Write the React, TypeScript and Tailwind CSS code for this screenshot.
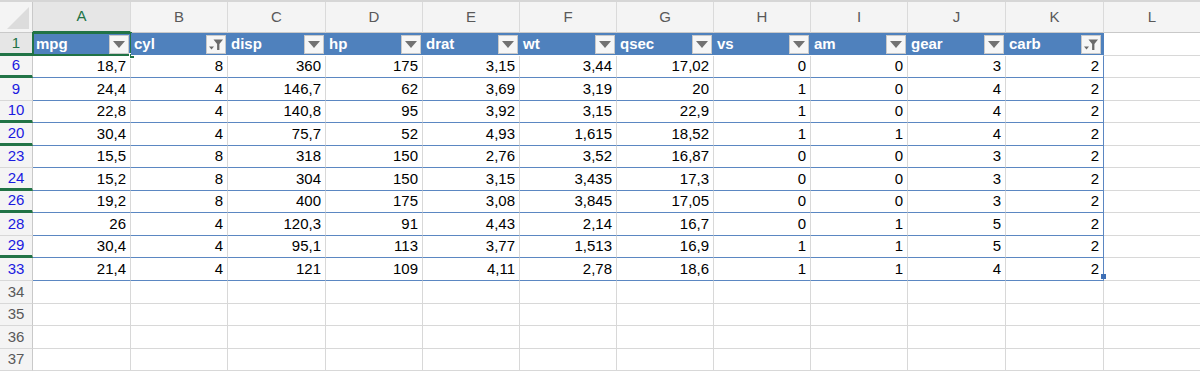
const font = { fontFamily: '"Liberation Sans", Arial, sans-serif' };

const cols = ["A", "B", "C", "D", "E", "F", "G", "H", "I", "J", "K"];
const widths = [
  "w-[98px]",
  "w-[97px]",
  "w-[98px]",
  "w-[97px]",
  "w-[97px]",
  "w-[97px]",
  "w-[97px]",
  "w-[97px]",
  "w-[97px]",
  "w-[98px]",
  "w-[98px]",
];
const heads = ["mpg", "cyl", "disp", "hp", "drat", "wt", "qsec", "vs", "am", "gear", "carb"];
const filtered = ["cyl", "carb"];

const rows: [number, string[]][] = [
  [6, ["18,7", "8", "360", "175", "3,15", "3,44", "17,02", "0", "0", "3", "2"]],
  [9, ["24,4", "4", "146,7", "62", "3,69", "3,19", "20", "1", "0", "4", "2"]],
  [10, ["22,8", "4", "140,8", "95", "3,92", "3,15", "22,9", "1", "0", "4", "2"]],
  [20, ["30,4", "4", "75,7", "52", "4,93", "1,615", "18,52", "1", "1", "4", "2"]],
  [23, ["15,5", "8", "318", "150", "2,76", "3,52", "16,87", "0", "0", "3", "2"]],
  [24, ["15,2", "8", "304", "150", "3,15", "3,435", "17,3", "0", "0", "3", "2"]],
  [26, ["19,2", "8", "400", "175", "3,08", "3,845", "17,05", "0", "0", "3", "2"]],
  [28, ["26", "4", "120,3", "91", "4,43", "2,14", "16,7", "0", "1", "5", "2"]],
  [29, ["30,4", "4", "95,1", "113", "3,77", "1,513", "16,9", "1", "1", "5", "2"]],
  [33, ["21,4", "4", "121", "109", "4,11", "2,78", "18,6", "1", "1", "4", "2"]],
];

function FilterButton({ active }: { active: boolean }) {
  return (
    <div className="w-[20px] h-[19px] mr-[2px] bg-[#f6f6f6] border border-[#c9c9c9] flex items-center justify-center">
      {active ? (
        <svg width="16" height="13" viewBox="0 0 16 13">
          <path d="M1 8.5h5l-2.5 3z" fill="#6a6a6a" />
          <path d="M5.5 1.5h9.5l-3.6 4.5v6h-2.3v-6z" fill="#6a6a6a" />
        </svg>
      ) : (
        <svg width="12" height="7" viewBox="0 0 12 7">
          <path d="M0 0h12l-6 7z" fill="#727272" />
        </svg>
      )}
    </div>
  );
}

function RowHeader({ n, color, marker, h }: { n: number; color: string; marker: boolean; h: string }) {
  return (
    <div
      className={`w-[33px] shrink-0 ${h} bg-[#f4f4f4] border-r border-[#c9c9c9] flex items-center justify-center text-[15px] ${color} ${
        marker ? "border-b-[3px] border-b-[#217346]" : "border-b border-b-[#d8d8d8]"
      }`}
    >
      {n}
    </div>
  );
}

export default function App() {
  const heights = ["h-[22px]", "h-[23px]"];
  const empty = [34, 35, 36, 37];

  return (
    <div className="w-[1200px] h-[372px] overflow-hidden bg-white text-black" style={font}>
      {/* column letters */}
      <div className="flex h-[33px] border-t-2 border-[#d6d6d6] bg-[#f4f4f4]">
        <div className="w-[33px] shrink-0 border-r border-b border-[#c9c9c9] relative">
          <svg className="absolute right-[3px] bottom-[3px]" width="22" height="22" viewBox="0 0 22 22">
            <path d="M22 0v22H0z" fill="#dcdcdc" />
          </svg>
        </div>
        {cols.map((c, i) => (
          <div
            key={c}
            className={`${widths[i]} shrink-0 flex items-center justify-center text-[15px] border-r border-[#dadada] ${
              i === 0
                ? "text-[#217346] bg-[#e6e6e6] border-b-2 border-b-[#217346]"
                : "text-[#595959] border-b border-b-[#c9c9c9]"
            }`}
          >
            {c}
          </div>
        ))}
        <div className="flex-1 flex items-center justify-center text-[15px] text-[#595959] border-b border-[#c9c9c9]">
          L
        </div>
      </div>

      {/* table header row */}
      <div className="flex h-[23px]">
        <div className="w-[33px] shrink-0 bg-[#e6e6e6] border-r border-[#c9c9c9] border-b-[3px] border-b-[#217346] flex items-center justify-center text-[15px] text-[#217346]">
          1
        </div>
        {heads.map((h, i) => (
          <div
            key={h}
            className={`${widths[i]} shrink-0 relative bg-[#4f81bd] flex items-center justify-between pl-[3px] border-b border-white ${
              i === 10 ? "border-r border-r-[#4f81bd]" : ""
            }`}
          >
            <span className="text-white font-bold text-[15px]">{h}</span>
            <FilterButton active={filtered.includes(h)} />
            {i === 0 && (
              <>
                <div className="absolute -left-[1px] -top-[1px] -right-[1px] -bottom-[1px] border-2 border-[#217346]" />
                <div className="absolute -right-[4px] -bottom-[4px] w-[6px] h-[6px] bg-[#217346] border border-white" />
              </>
            )}
          </div>
        ))}
        <div className="flex-1 border-b border-[#d8d8d8]" />
      </div>

      {/* data rows */}
      {rows.map(([n, vals], r) => {
        const next = r + 1 < rows.length ? rows[r + 1][0] : 34;
        const h = heights[r % 2];
        return (
          <div key={n} className="flex">
            <RowHeader n={n} color="text-[#1a1ae0]" marker={next - n > 1} h={h} />
            {vals.map((v, i) => (
              <div
                key={i}
                className={`${widths[i]} shrink-0 ${h} flex items-center justify-end pr-[4px] text-[15px] border-b border-b-[#5b87c2] ${
                  i === 10 ? "border-r border-r-[#5b87c2]" : "border-r border-r-[#d8d8d8]"
                }`}
              >
                {v}
                {r === rows.length - 1 && i === 10 && (
                  <span className="relative">
                    <span className="absolute -right-[7px] top-[5px] w-[5px] h-[5px] bg-[#3e6fb5]" />
                  </span>
                )}
              </div>
            ))}
            <div className={`flex-1 ${h} border-b border-[#d8d8d8]`} />
          </div>
        );
      })}

      {/* empty rows */}
      {empty.map((n, r) => {
        const h = heights[(r + 1) % 2];
        return (
          <div key={n} className="flex">
            <RowHeader n={n} color="text-[#595959]" marker={false} h={h} />
            {cols.map((c, i) => (
              <div key={c} className={`${widths[i]} shrink-0 ${h} border-r border-b border-[#d8d8d8]`} />
            ))}
            <div className={`flex-1 ${h} border-b border-[#d8d8d8]`} />
          </div>
        );
      })}
    </div>
  );
}
